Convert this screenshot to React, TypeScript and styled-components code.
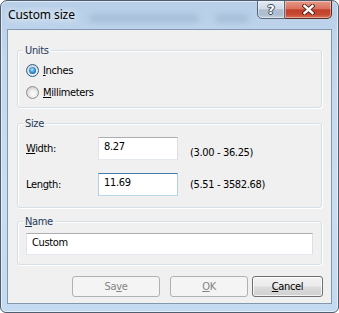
import React from 'react';
import styled, { createGlobalStyle } from 'styled-components';

const Global = createGlobalStyle`
  html, body { margin: 0; padding: 0; background: #ffffff; }
  body { width: 339px; height: 313px; overflow: hidden; }
  * { box-sizing: border-box; }
`;

const BODY_FONT = `"DejaVu Sans Condensed", "DejaVu Sans", sans-serif`;

const Window = styled.div`
  position: relative;
  width: 339px;
  height: 313px;
  border: 1px solid #4f5d6e;
  border-radius: 7px 7px 6px 6px;
  padding: 0 6px 8px 6px;
  display: flex;
  flex-direction: column;
  overflow: hidden;
  background: linear-gradient(180deg, #b7cfe8 0%, #c3d8ef 20%, #c9ddf2 60%, #c4daf1 100%);
  box-shadow: inset 0 0 0 1px rgba(255, 255, 255, 0.55);
`;

const GlassBlur = styled.div`
  position: absolute;
  left: 0;
  top: 0;
  width: 339px;
  height: 30px;
  pointer-events: none;
  &::before,
  &::after {
    content: '';
    position: absolute;
    top: 14px;
    height: 7px;
    border-radius: 4px;
    background: rgba(120, 145, 175, 0.35);
    filter: blur(3px);
  }
  &::before { left: 88px; width: 110px; }
  &::after { left: 214px; width: 34px; }
`;

const TitleBar = styled.div`
  position: relative;
  height: 28px;
  display: flex;
  align-items: flex-start;
  justify-content: space-between;
`;

const Title = styled.div`
  margin: 6px 0 0 1px;
  font-family: "Noto Sans", sans-serif;
  font-size: 12px;
  line-height: 16px;
  letter-spacing: -0.1px;
  color: #000;
  text-shadow: 0 0 6px #ffffff, 0 0 10px rgba(255, 255, 255, 0.9);
`;

const CaptionButtons = styled.div`
  display: flex;
  margin-top: -1px;
`;

const CaptionButton = styled.div<{ $kind: 'help' | 'close' }>`
  width: ${(p) => (p.$kind === 'close' ? '47px' : '28px')};
  height: 19px;
  display: flex;
  align-items: center;
  justify-content: center;
  border: 1px solid ${(p) => (p.$kind === 'close' ? '#5e2a22' : '#5b6675')};
  border-left-width: ${(p) => (p.$kind === 'close' ? '0' : '1px')};
  border-radius: ${(p) => (p.$kind === 'close' ? '0 0 5px 0' : '0 0 0 5px')};
  background: ${(p) =>
    p.$kind === 'close'
      ? 'linear-gradient(180deg, #e59a89 0%, #d8725f 45%, #c23f2a 52%, #c64a33 80%, #d8735a 100%)'
      : 'linear-gradient(180deg, #e2eaf3 0%, #d0dbe7 45%, #b0bfd0 52%, #aebdce 80%, #c3d3e4 100%)'};
  box-shadow: inset 0 0 0 1px rgba(255, 255, 255, 0.4);
`;

const HelpGlyph = styled.span`
  font-family: "DejaVu Sans", sans-serif;
  font-weight: bold;
  font-size: 13px;
  line-height: 13px;
  color: #ffffff;
  text-shadow: -1px 0 #3b4654, 1px 0 #3b4654, 0 -1px #3b4654, 0 1px #3b4654;
`;

const Client = styled.div`
  flex: 1;
  display: flex;
  flex-direction: column;
  border: 1px solid #8397ad;
  background: #f0f0f0;
  font-family: ${BODY_FONT};
  font-size: 11px;
  letter-spacing: -0.35px;
  color: #000;
`;

const Group = styled.fieldset<{ $top: number; $padTop: number; $padBottom: number }>`
  margin: ${(p) => p.$top}px 9px 0 9px;
  padding: ${(p) => p.$padTop}px 0 ${(p) => p.$padBottom}px 0;
  border: 1px solid #d5dfe5;
  border-radius: 3px;
  min-inline-size: 0;
  box-shadow: 1px 1px 0 #ffffff, inset 1px 1px 0 #ffffff;
`;

const Legend = styled.legend`
  margin-left: 5px;
  padding: 0 2px;
  line-height: 13px;
  font-size: 11px;
  color: #1e395b;
  background: #f0f0f0;
`;

const RadioRow = styled.div`
  height: 22px;
  display: flex;
  align-items: center;
  gap: 4px;
  padding-left: 8px;
`;

const RadioCircle = styled.span<{ $checked: boolean }>`
  width: 13px;
  height: 13px;
  flex: none;
  border-radius: 50%;
  border: 1px solid ${(p) => (p.$checked ? '#2c628b' : '#8e8f8f')};
  display: flex;
  align-items: center;
  justify-content: center;
  background: radial-gradient(circle at 55% 60%, #fbfbfb 0%, #f0f0f0 35%, #d0d0d0 75%, #c4c4c4 100%);
  &::after {
    content: '';
    display: ${(p) => (p.$checked ? 'block' : 'none')};
    width: 7px;
    height: 7px;
    border-radius: 50%;
    background: radial-gradient(circle at 45% 40%, #c4ecff 0%, #4aa6e4 35%, #1b67a8 75%, #0f3f6c 100%);
  }
`;

const SizeGrid = styled.div`
  display: grid;
  grid-template-columns: 72px 80px auto;
  row-gap: 13px;
  align-items: center;
  padding-left: 8px;
`;

const FieldLabel = styled.label`
  line-height: 13px;
`;

const RangeText = styled.span<{ $shift: number }>`
  margin-left: 12px;
  line-height: 13px;
  padding-top: ${(p) => p.$shift}px;
`;

const TextBox = styled.input<{ $focused?: boolean; $width: string; $height: number }>`
  display: block;
  width: ${(p) => p.$width};
  height: ${(p) => p.$height}px;
  margin: 0;
  padding: 2px 4px ${(p) => p.$height - 17}px 5px;
  font-family: ${BODY_FONT};
  font-size: 11px;
  letter-spacing: -0.35px;
  line-height: 13px;
  color: #000;
  background: #fff;
  outline: none;
  border: 1px solid;
  border-color: ${(p) =>
    p.$focused ? '#3d7bad #b5cfe7 #b7d9ed #b5cfe7' : '#abadb3 #dbdfe6 #e3e9ef #e2e3ea'};
`;

const NameBox = styled.div`
  padding: 0 8px;
`;

const ButtonRow = styled.div`
  margin-top: 11px;
  display: flex;
  justify-content: flex-end;
  padding-right: 8px;
`;

const DialogButton = styled.button<{ $width: number; $gap: number }>`
  width: ${(p) => p.$width}px;
  height: 21px;
  margin: 0 0 0 ${(p) => p.$gap}px;
  padding: 0;
  font-family: ${BODY_FONT};
  font-size: 11px;
  letter-spacing: -0.35px;
  line-height: 13px;
  border-radius: 3px;
  color: #000;
  border: 1px solid #707070;
  background: linear-gradient(180deg, #f2f2f2 0%, #ebebeb 48%, #dddddd 52%, #cfcfcf 100%);
  box-shadow: inset 0 0 0 1px rgba(255, 255, 255, 0.75);
  &:disabled {
    color: #838383;
    border-color: #adb2b5;
    background: #f4f4f4;
    box-shadow: none;
  }
`;

const Key = styled.span`
  text-decoration: underline;
  text-underline-offset: 1px;
`;

const CloseIcon = () => (
  <svg width="13" height="11" viewBox="0 0 13 11">
    <path d="M2.5 2 L10.5 9 M10.5 2 L2.5 9" stroke="#4a1a12" strokeWidth="4.2" strokeLinecap="square" />
    <path d="M2.5 2 L10.5 9 M10.5 2 L2.5 9" stroke="#ffffff" strokeWidth="2.4" strokeLinecap="square" />
  </svg>
);

export default function App() {
  return (
    <>
      <Global />
      <Window>
        <GlassBlur />
        <TitleBar>
          <Title>Custom size</Title>
          <CaptionButtons>
            <CaptionButton $kind="help">
              <HelpGlyph>?</HelpGlyph>
            </CaptionButton>
            <CaptionButton $kind="close">
              <CloseIcon />
            </CaptionButton>
          </CaptionButtons>
        </TitleBar>
        <Client>
          <Group $top={14} $padTop={2} $padBottom={4}>
            <Legend>Units</Legend>
            <RadioRow>
              <RadioCircle $checked />
              <span>
                <Key>I</Key>nches
              </span>
            </RadioRow>
            <RadioRow>
              <RadioCircle $checked={false} />
              <span>
                <Key>M</Key>illimeters
              </span>
            </RadioRow>
          </Group>

          <Group $top={9} $padTop={7} $padBottom={11}>
            <Legend>Size</Legend>
            <SizeGrid>
              <FieldLabel>
                <Key>W</Key>idth:
              </FieldLabel>
              <TextBox $width="80px" $height={23} readOnly defaultValue="8.27" />
              <RangeText $shift={8}>(3.00 - 36.25)</RangeText>
              <FieldLabel>
                Len<Key>g</Key>th:
              </FieldLabel>
              <TextBox $width="80px" $height={23} $focused readOnly defaultValue="11.69" />
              <RangeText $shift={0}>(5.51 - 3582.68)</RangeText>
            </SizeGrid>
          </Group>

          <Group $top={7} $padTop={5} $padBottom={9}>
            <Legend>
              <Key>N</Key>ame
            </Legend>
            <NameBox>
              <TextBox $width="100%" $height={22} readOnly defaultValue="Custom" />
            </NameBox>
          </Group>

          <ButtonRow>
            <DialogButton $width={88} $gap={0} disabled>
              Sa<Key>v</Key>e
            </DialogButton>
            <DialogButton $width={78} $gap={10} disabled>
              <Key>O</Key>K
            </DialogButton>
            <DialogButton $width={71} $gap={4}>
              <Key>C</Key>ancel
            </DialogButton>
          </ButtonRow>
        </Client>
      </Window>
    </>
  );
}
